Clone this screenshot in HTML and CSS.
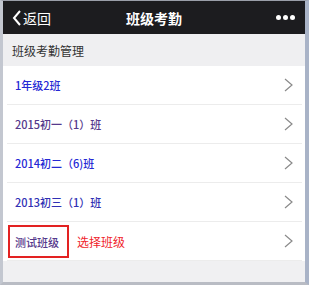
FILE: index.html
```html
<!DOCTYPE html>
<html lang="zh-CN">
<head>
    <meta charset="UTF-8">
    <meta name="viewport" content="width=device-width, initial-scale=1.0">
    <title>班级考勤</title>
    <link rel="stylesheet" href="styles.css">
</head>
<body>
    <div class="frame">
        <div class="navbar">
            <div class="back">
                <svg class="back-icon" width="10" height="16" viewBox="0 0 10 16">
                    <polyline points="8,1 2,8 8,15" fill="none" stroke="#fff" stroke-width="2"/>
                </svg>
                <span>返回</span>
            </div>
            <div class="title">班级考勤</div>
            <div class="more"><i></i><i></i><i></i></div>
        </div>

        <div class="section-title">班级考勤管理</div>

        <div class="list">
            <div class="row">
                <span class="name link">1年级2班</span>
                <svg class="chevron" width="10" height="16" viewBox="0 0 10 16"><polyline points="1,2 8,8 1,14"/></svg>
            </div>
            <div class="row">
                <span class="name visited">2015初一（1）班</span>
                <svg class="chevron" width="10" height="16" viewBox="0 0 10 16"><polyline points="1,2 8,8 1,14"/></svg>
            </div>
            <div class="row">
                <span class="name link">2014初二（6)班</span>
                <svg class="chevron" width="10" height="16" viewBox="0 0 10 16"><polyline points="1,2 8,8 1,14"/></svg>
            </div>
            <div class="row">
                <span class="name link dim">2013初三（1）班</span>
                <svg class="chevron" width="10" height="16" viewBox="0 0 10 16"><polyline points="1,2 8,8 1,14"/></svg>
            </div>
            <div class="row row-marked">
                <span class="name visited boxed">测试班级</span>
                <span class="note">选择班级</span>
                <svg class="chevron" width="10" height="16" viewBox="0 0 10 16"><polyline points="1,2 8,8 1,14"/></svg>
            </div>
        </div>

        <div class="footer-space"></div>
    </div>
</body>
</html>
```

FILE: styles.css
```css
body {
    margin: 0;
    font-family: "Noto Sans CJK SC", "Noto Sans", sans-serif;
    background: #fff;
}
.frame {
    width: 302px;
    height: 281px;
    border-top: 1px solid #9a9ea8;
    border-left: 3px solid #c3c7d0;
    border-right: 4px solid #a9b3c7;
    border-bottom: 3px solid #b9bcc4;
    background: #f0f0f2;
    display: flex;
    flex-direction: column;
}
.navbar {
    height: 33px;
    flex-shrink: 0;
    background: #1c1c1f;
    color: #fff;
    display: flex;
    align-items: center;
    position: relative;
}
.back {
    display: flex;
    align-items: center;
    gap: 1px;
    padding-left: 9px;
    font-size: 14px;
}
.title {
    position: absolute;
    left: 0;
    right: 0;
    text-align: center;
    font-size: 14px;
    font-weight: bold;
    pointer-events: none;
}
.more {
    margin-left: auto;
    margin-right: 10px;
    display: flex;
    gap: 2px;
}
.more i {
    width: 5px;
    height: 5px;
    border-radius: 50%;
    background: #fff;
}
.section-title {
    height: 32px;
    flex-shrink: 0;
    padding-left: 9px;
    display: flex;
    align-items: center;
    font-size: 12px;
    color: #333;
    background: #efeff1;
}
.list {
    background: #fff;
    padding: 0 3px 0 4px;
}
.row {
    height: 38px;
    border-bottom: 1px solid #ececec;
    display: flex;
    align-items: center;
    padding-left: 8px;
    padding-right: 8px;
}
.name {
    font-size: 11px;
    font-weight: 500;
}
.link {
    color: #2528d4;
}
.dim {
    color: #3030b4;
}
.visited {
    color: #55398c;
}
.row-marked {
    padding-left: 1px;
}
.boxed {
    border: 2px solid #e32222;
    height: 29px;
    padding: 0 5px 0 5px;
    width: 47px;
    display: flex;
    align-items: center;
    margin-top: 1px;
}
.note {
    margin-left: 8px;
    color: #f0232a;
    font-size: 12px;
}
.chevron {
    margin-left: auto;
    fill: none;
    stroke: #8a8a8a;
    stroke-width: 1.2;
}
.footer-space {
    flex: 1;
    background: #f0f0f2;
}
```
